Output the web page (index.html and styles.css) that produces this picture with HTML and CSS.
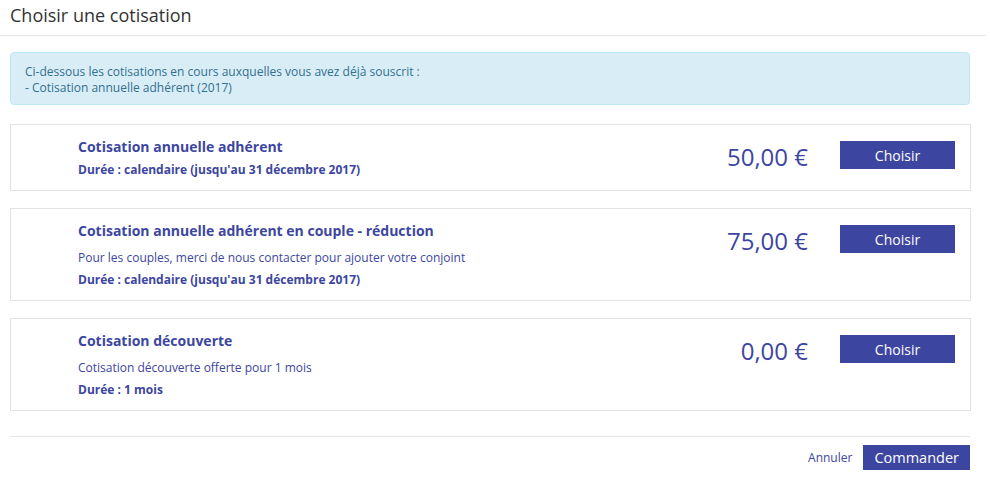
FILE: index.html
```html
<!DOCTYPE html>
<html lang="fr">
  <head>
    <meta charset="UTF-8" />
    <meta name="viewport" content="width=device-width, initial-scale=1.0" />
    <link rel="stylesheet" href="styles.css">
  </head>
  <body>
    <div class="modal">
      <div class="modal-header">
        <h4 class="modal-title">Choisir une cotisation</h4>
      </div>
      <div class="modal-body">
        <div class="alert-info">
          Ci-dessous les cotisations en cours auxquelles vous avez déjà souscrit :<br />
          - Cotisation annuelle adhérent (2017)
        </div>

        <div class="offer">
          <div class="offer-text">
            <div class="offer-title">Cotisation annuelle adhérent</div>
            <div class="offer-duree">Durée : calendaire (jusqu'au 31 décembre 2017)</div>
          </div>
          <div class="offer-price">50,00 €</div>
          <button class="btn btn-choose">Choisir</button>
        </div>

        <div class="offer">
          <div class="offer-text">
            <div class="offer-title">Cotisation annuelle adhérent en couple - réduction</div>
            <div class="offer-desc">Pour les couples, merci de nous contacter pour ajouter votre conjoint</div>
            <div class="offer-duree">Durée : calendaire (jusqu'au 31 décembre 2017)</div>
          </div>
          <div class="offer-price">75,00 €</div>
          <button class="btn btn-choose">Choisir</button>
        </div>

        <div class="offer">
          <div class="offer-text">
            <div class="offer-title">Cotisation découverte</div>
            <div class="offer-desc">Cotisation découverte offerte pour 1 mois</div>
            <div class="offer-duree">Durée : 1 mois</div>
          </div>
          <div class="offer-price">0,00 €</div>
          <button class="btn btn-choose">Choisir</button>
        </div>
      </div>
      <div class="modal-footer">
        <a href="#" class="link-cancel">Annuler</a>
        <button class="btn btn-order">Commander</button>
      </div>
    </div>
  </body>
</html>
```

FILE: styles.css
```css
* {
  box-sizing: border-box;
}

body {
  margin: 0;
  font-family: "Open Sans", "Liberation Sans", Arial, sans-serif;
  background-color: #fff;
  color: #333;
}

.modal {
  width: 986px;
}

.modal-header {
  height: 36px;
  padding: 3px 10px 0 10px;
  border-bottom: 1px solid #e5e5e5;
}

.modal-title {
  margin: 0;
  font-size: 18px;
  font-weight: normal;
  line-height: 24px;
  color: #333;
}

.modal-body {
  padding: 16px 0 0 10px;
  width: 970px;
}

.alert-info {
  background-color: #d9edf7;
  border: 1px solid #bce8f1;
  border-radius: 4px;
  color: #31708f;
  font-size: 12px;
  line-height: 16px;
  padding: 11px 14px 8px 14px;
  margin-bottom: 19px;
}

.offer {
  display: flex;
  align-items: flex-start;
  border: 1px solid #e2e2e2;
  width: 961px;
  padding: 12px 15px 12px 67px;
  margin-bottom: 17px;
  color: #3c46a1;
}

.offer-text {
  flex: 1;
}

.offer-title {
  font-size: 14px;
  font-weight: bold;
  line-height: 20px;
}

.offer-desc {
  font-size: 12px;
  line-height: 18px;
  margin-top: 8px;
}

.offer-duree {
  font-size: 12px;
  font-weight: bold;
  line-height: 16px;
  margin-top: 5px;
}

.offer-price {
  font-size: 24px;
  line-height: 32px;
  margin-top: 4px;
  margin-right: 32px;
}

.btn {
  font-family: "Open Sans", "Liberation Sans", Arial, sans-serif;
  background-color: #3c46a1;
  color: #fff;
  border: none;
  border-radius: 0;
  cursor: pointer;
}

.btn-choose {
  width: 115px;
  height: 28px;
  margin-top: 4px;
  font-size: 14px;
  padding: 0;
}

.modal-footer {
  margin: 25px 0 0 10px;
  width: 960px;
  border-top: 1px solid #e5e5e5;
  padding-top: 8px;
  display: flex;
  justify-content: flex-end;
  align-items: center;
  gap: 11px;
}

.link-cancel {
  font-size: 12px;
  color: #3c46a1;
  text-decoration: none;
}

.btn-order {
  height: 25px;
  font-size: 14.5px;
  padding: 0 11px;
}
```
